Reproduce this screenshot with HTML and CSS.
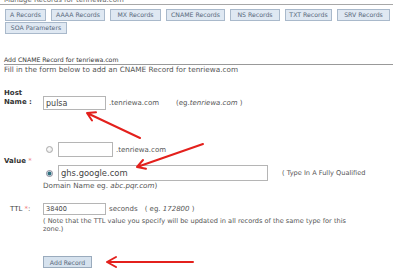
FILE: index.html
```html
<!DOCTYPE html>
<html lang="en">
  <head>
    <meta charset="UTF-8" />
    <title>Manage Records</title>
    <link rel="stylesheet" href="styles.css">
  </head>
  <body>
    <div class="manage">Manage Records for tenriewa.com</div>

    <!-- Record tabs -->
    <div class="tabs">
      <span class="tab w-a">A Records</span>
      <span class="tab w-aaaa">AAAA Records</span>
      <span class="tab w-mx">MX Records</span>
      <span class="tab w-cname">CNAME Records</span>
      <span class="tab w-ns">NS Records</span>
      <span class="tab w-txt">TXT Records</span>
      <span class="tab w-srv">SRV Records</span>
      <span class="tab w-soa">SOA Parameters</span>
    </div>

    <!-- Form -->
    <div class="section-title">Add CNAME Record for tenriewa.com</div>
    <div class="intro">Fill in the form below to add an CNAME Record for tenriewa.com</div>

    <div class="row row-host">
      <div class="label">Host<br />Name :</div>
      <div class="field field-host">
        <input class="text w-host" type="text" value="pulsa" />
        <span class="suffix">.tenriewa.com</span>
        <span class="example">(eg.<i>tenriewa.com</i> )</span>
      </div>
    </div>

    <div class="row row-value">
      <div class="label">Value <span class="req">*</span></div>
      <div class="field">
        <div class="choice">
          <input class="radio" type="radio" name="value" />
          <input class="text w-sub" type="text" value="" />
          <span class="suffix">.tenriewa.com</span>
        </div>
        <div class="choice choice-fq">
          <input class="radio" type="radio" name="value" checked />
          <input class="text w-fq" type="text" value="ghs.google.com" />
          <span class="hint">( Type In A Fully Qualified</span>
        </div>
      </div>
    </div>
    <div class="domain-note">Domain Name <span>eg.</span> <i>abc.pqr.com</i>)</div>

    <div class="row row-ttl">
      <div class="label label-ttl">TTL <span class="req">*</span>:</div>
      <div class="field field-ttl">
        <input class="text w-ttl" type="text" value="38400" />
        <span class="suffix">seconds</span>
        <span class="ttl-example">( eg. <i>172800</i> )</span>
      </div>
    </div>
    <div class="note">( Note that the TTL value you specify will be updated in all records of the same type for this<br />zone.)</div>

    <button class="btn" type="button">Add Record</button>

    <!-- Red arrows drawn over the screenshot -->
    <svg class="arrows" width="400" height="269" viewBox="0 0 400 269">
      <g fill="none" stroke="#e3201c" stroke-width="2" stroke-linecap="round" stroke-linejoin="round">
        <path d="M140 138 L87 113 M92 120.5 L87 113 L96 112.3" />
        <path d="M203 144 L137 167 M143 160 L137 167 L146 168.7" />
        <path d="M193 262 L107 262 M116 257 L107 262 L116 267" />
      </g>
    </svg>
  </body>
</html>
```

FILE: styles.css
```css
body {
  margin: 0;
  padding: 0 0 0 4px;
  height: 269px;
  overflow: hidden;
  position: relative;
  background: #fff;
  color: #555;
  font-family: "DejaVu Sans", Verdana, sans-serif;
  font-size: 7px;
}

/* Header line, cut off at the top */
.manage {
  margin: -4px 0 0 -4px;
  padding-left: 4px;
  width: 389px;
  line-height: 8px;
  color: #666;
  border-bottom: 1px solid #a8a8a8;
}

/* Tabs */
.tabs {
  display: flex;
  flex-wrap: wrap;
  gap: 1px 5px;
  margin: 4px 0 0 1px;
  width: 390px;
}
.tab {
  box-sizing: border-box;
  height: 12px;
  line-height: 10px;
  border: 1px solid #a9b9cb;
  background: #dfe8f2;
  color: #56677a;
  font-size: 6.2px;
  text-align: center;
}
.w-a { width: 41px; }
.w-aaaa { width: 54px; }
.w-mx { width: 51px; }
.w-cname { width: 59px; }
.w-ns { width: 50px; }
.w-txt { width: 47px; }
.w-srv { width: 53px; }
.w-soa { width: 62px; }

/* Form */
.section-title {
  margin-top: 22px;
  width: 389px;
  line-height: 8px;
  font-size: 6.2px;
  color: #333;
  border-bottom: 1px solid #999;
}
.intro {
  line-height: 9px;
  font-size: 7.3px;
}

.row {
  display: flex;
}
.label {
  width: 39px;
  flex: none;
  line-height: 9px;
  font-weight: bold;
  color: #333;
}
.req {
  color: #f08080;
  font-weight: normal;
}
.field {
  display: flex;
  flex-direction: column;
}

.text {
  box-sizing: border-box;
  margin: 0;
  padding: 0 2px;
  height: 14px;
  border: 1px solid #b5b5b5;
  background: #fff;
  color: #444;
  font-family: inherit;
  font-size: 8px;
  outline: none;
}
.suffix {
  margin-left: 3px;
}

.row-host {
  margin-top: 15px;
}
.field-host {
  flex-direction: row;
  align-items: center;
  margin-top: 7px;
}
.w-host { width: 63px; }
.example {
  margin-left: 17px;
}

.row-value {
  align-items: center;
  margin-top: 32px;
}
.choice {
  display: flex;
  align-items: center;
}
.choice + .choice {
  margin-top: 8px;
}
.radio {
  appearance: none;
  box-sizing: border-box;
  margin: 0 5px 0 3px;
  width: 7px;
  height: 7px;
  border: 1px solid #aaa;
  border-radius: 50%;
  background: radial-gradient(circle at 40% 40%, #fff, #ddd);
}
.radio:checked {
  background: radial-gradient(circle, #2f6f7e 0, #2f6f7e 1.6px, #cfe1e6 2.2px);
  border-color: #889;
}
.w-sub { width: 55px; height: 15px; }
.w-fq { width: 210px; height: 16px; font-size: 8.4px; }
.hint {
  margin-left: 14px;
  font-size: 6.6px;
}
.domain-note {
  margin: 1px 0 0 39px;
  line-height: 8px;
  font-size: 7.2px;
}

.row-ttl {
  align-items: center;
  margin-top: 13px;
}
.label-ttl {
  padding-left: 6px;
  width: 33px;
  font-weight: normal;
  color: #444;
}
.field-ttl {
  flex-direction: row;
  align-items: center;
}
.w-ttl { width: 63px; height: 12px; font-size: 6.6px; }
.ttl-example {
  margin-left: 7px;
}
.note {
  margin: 2px 0 0 39px;
  line-height: 8px;
  font-size: 6.6px;
}

.btn {
  display: block;
  box-sizing: border-box;
  margin: 23px 0 0 39px;
  padding: 0;
  width: 49px;
  height: 12px;
  border: 1px solid #9aabbd;
  background: #d6e2ee;
  color: #56677a;
  font-family: inherit;
  font-size: 6.2px;
}

/* Arrows over the page */
.arrows {
  position: absolute;
  top: 0;
  left: 0;
  pointer-events: none;
}
```
